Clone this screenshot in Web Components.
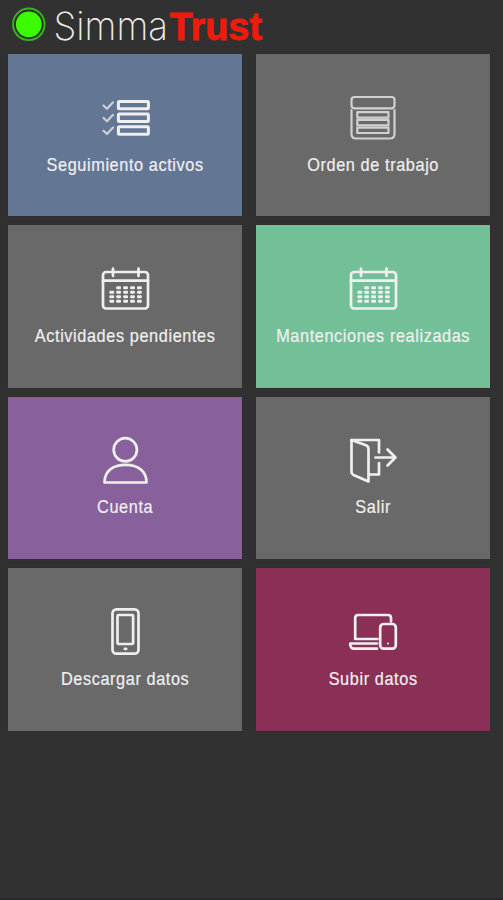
<!DOCTYPE html>
<html lang="es">
<head>
<meta charset="utf-8">
<title>SimmaTrust</title>
<style>
html, body { margin: 0; height: 100%; background: #313131; }
body { overflow: hidden; font-family: "Liberation Sans", Arial, sans-serif; }
</style>
</head>
<body>
<simma-app></simma-app>
<script>
const calendar = () => {
  let dots = '';
  [22.8, 27.3, 31.7, 36.2].forEach((y, r) => [10.8, 17.6, 24.6, 31.5, 38.4].forEach((cx, c) => {
    if (r || c) dots += `<rect x="${cx - 2.4}" y="${y - 1.5}" width="4.8" height="3" rx="1" fill="currentColor" stroke="none"/>`;
  }));
  return `<rect x="2" y="7" width="45" height="36.5" rx="3"/><path d="M2 15.7h45M12 3.5v7.5M37.5 3.5v7.5"/>${dots}`;
};
const icons = {
  lista: '<g stroke-width="3"><rect x="17.4" y="7.4" width="30" height="7.4" rx="1"/><rect x="17.4" y="20.1" width="30" height="7.4" rx="1"/><rect x="17.4" y="32.8" width="30" height="7.4" rx="1"/></g><path stroke-width="2.2" opacity=".75" d="M2.5 11.5l3.5 3.2 6-6.4M2.5 24l3.5 3.2 6-6.4M2.5 36.7l3.5 3.2 6-6.4"/>',
  orden: '<g stroke-width="2.2" opacity=".78"><rect x="2.5" y="3" width="43" height="11.3" rx="3"/><path d="M2.5 16v24q0 4.5 4.5 4.5h34q4.5 0 4.5-4.5V16"/><rect x="8.3" y="18.2" width="31.2" height="5.4"/><rect x="8.3" y="25.9" width="31.2" height="5.4"/><rect x="8.3" y="33.6" width="31.2" height="5.4"/></g>',
  calendario: calendar(),
  usuario: '<circle cx="24.3" cy="12.8" r="11.6"/><path d="M3.5 45.5C3.5 34 12 27.9 24.5 27.9S45.5 34 45.5 45.5Z"/>',
  salir: '<path d="M2.5 3H30V15.5M30 26V37.5H20"/><path d="M2.5 3L17 8.3Q19.5 9.3 19.5 12V44.5L4.5 38Q2.5 37 2.5 35Z"/><path d="M26.5 20.5H46.500M38.5 12.5l8 8-8 8"/>',
  telefono: '<rect x="11.5" y="1.3" width="26" height="44.4" rx="4"/><rect x="16.5" y="7" width="15.6" height="29" rx="1"/><rect x="22.6" y="39.6" width="3.8" height="2.6" rx="1" fill="currentColor" stroke="none"/>',
  equipos: '<path d="M28.5 31H6.200V10Q6.200 7 9.200 7H39Q42 7 42 10V13.500M28 35.500H1.200Q1.200 40.700 5 40.700H28"/><rect x="31.2" y="16" width="15.6" height="24.7" rx="3.5"/><circle cx="39" cy="35.5" r="1" fill="currentColor" stroke="none"/>'
};

class SimmaLogo extends HTMLElement {
  constructor() {
    super();
    this.attachShadow({ mode: 'open' }).innerHTML = `
<style>
:host { display: block; height: 54px; }
svg { display: block; }
.thin { font: 200 39px Inter, "Liberation Sans", sans-serif; fill: #ececec; }
.bold { font: 700 38.5px "Liberation Sans", Arial, sans-serif; fill: #ed1c0c; stroke: #ed1c0c; stroke-width: .8; }
</style>
<svg width="300" height="54">
<circle cx="28.8" cy="24.3" r="15.8" fill="none" stroke="#36b51f" stroke-width="1.9"/>
<circle cx="28.8" cy="24.3" r="12.9" fill="#3cfc00"/>
<text class="thin" x="53.500" y="39.600" textLength="114.500" lengthAdjust="spacingAndGlyphs">Simma</text>
<text class="bold" x="169.500" y="39.500" textLength="92.500" lengthAdjust="spacingAndGlyphs">Trust</text>
</svg>`;
  }
}
customElements.define('simma-logo', SimmaLogo);

class MenuTile extends HTMLElement {
  connectedCallback() {
    this.attachShadow({ mode: 'open' }).innerHTML = `
<style>
:host { display: flex; flex-direction: column; align-items: center; box-sizing: border-box; padding-top: 40px; background: var(--tile, #696969); color: #efefef; box-shadow: 0 0 1px #252525; }
svg { display: block; width: 48px; height: 48px; flex: none; overflow: visible; fill: none; stroke: currentColor; stroke-width: 2.7; stroke-linecap: round; stroke-linejoin: round; }
span { margin-top: 12.5px; font-size: 16.3px; line-height: 20px; white-space: nowrap; letter-spacing: .6px; transform: scaleY(1.07); -webkit-text-stroke: .2px currentColor; }
</style>
<svg viewBox="0 0 48 48">${icons[this.getAttribute('icon')]}</svg>
<span><slot></slot></span>`;
  }
}
customElements.define('menu-tile', MenuTile);

class SimmaApp extends HTMLElement {
  constructor() {
    super();
    this.attachShadow({ mode: 'open' }).innerHTML = `
<style>
:host { display: block; box-sizing: border-box; height: 900px; border-bottom: 2px solid #2b272c; }
main { display: grid; grid-template-columns: 233.5px 233.5px; grid-auto-rows: 162.3px; gap: 9.2px 14.5px; padding-left: 8.4px; }
</style>
<simma-logo></simma-logo>
<main>
<menu-tile icon="lista" style="--tile:#637694">Seguimiento activos</menu-tile>
<menu-tile icon="orden">Orden de trabajo</menu-tile>
<menu-tile icon="calendario">Actividades pendientes</menu-tile>
<menu-tile icon="calendario" style="--tile:#73c098">Mantenciones realizadas</menu-tile>
<menu-tile icon="usuario" style="--tile:#87609c">Cuenta</menu-tile>
<menu-tile icon="salir">Salir</menu-tile>
<menu-tile icon="telefono">Descargar datos</menu-tile>
<menu-tile icon="equipos" style="--tile:#8a3056">Subir datos</menu-tile>
</main>`;
  }
}
customElements.define('simma-app', SimmaApp);
</script>
</body>
</html>
